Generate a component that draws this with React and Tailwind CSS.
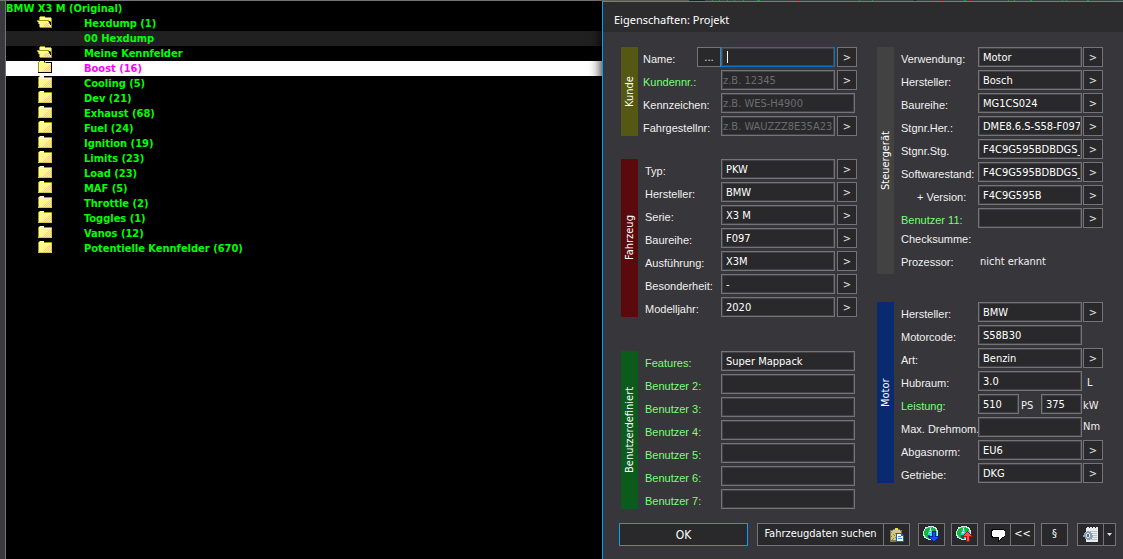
import { useState } from "react";
import clsx from "clsx";

/* ================= DATA ================= */
const TREE = [
  { name: "Hexdump (1)", icon: "open" },
  { name: "00 Hexdump", shaded: true },
  { name: "Meine Kennfelder", icon: "open" },
  { name: "Boost (16)", icon: "closed" },
  { name: "Cooling (5)", icon: "closed" },
  { name: "Dev (21)", icon: "closed" },
  { name: "Exhaust (68)", icon: "closed" },
  { name: "Fuel (24)", icon: "closed" },
  { name: "Ignition (19)", icon: "closed" },
  { name: "Limits (23)", icon: "closed" },
  { name: "Load (23)", icon: "closed" },
  { name: "MAF (5)", icon: "closed" },
  { name: "Throttle (2)", icon: "closed" },
  { name: "Toggles (1)", icon: "closed" },
  { name: "Vanos (12)", icon: "closed" },
  { name: "Potentielle Kennfelder (670)", icon: "closed" },
];

const VEHICLE = [
  { id: "typ", label: "Typ:", value: "PKW" },
  { id: "fz-hersteller", label: "Hersteller:", value: "BMW" },
  { id: "serie", label: "Serie:", value: "X3 M" },
  { id: "fz-baureihe", label: "Baureihe:", value: "F097" },
  { id: "ausfuehrung", label: "Ausführung:", value: "X3M" },
  { id: "besonderheit", label: "Besonderheit:", value: "-" },
  { id: "modelljahr", label: "Modelljahr:", value: "2020" },
];

const CUSTOM = [
  { id: "features", label: "Features:", value: "Super Mappack" },
  { id: "benutzer2", label: "Benutzer 2:" },
  { id: "benutzer3", label: "Benutzer 3:" },
  { id: "benutzer4", label: "Benutzer 4:" },
  { id: "benutzer5", label: "Benutzer 5:" },
  { id: "benutzer6", label: "Benutzer 6:" },
  { id: "benutzer7", label: "Benutzer 7:" },
];

const ECU = [
  { id: "verwendung", label: "Verwendung:", value: "Motor" },
  { id: "sg-hersteller", label: "Hersteller:", value: "Bosch" },
  { id: "sg-baureihe", label: "Baureihe:", value: "MG1CS024" },
  { id: "stgnr-her", label: "Stgnr.Her.:", value: "DME8.6.S-S58-F097" },
  { id: "stgnr-stg", label: "Stgnr.Stg.", value: "F4C9G595BDBDGS_" },
  { id: "softwarestand", label: "Softwarestand:", value: "F4C9G595BDBDGS_" },
  { id: "version", label: "+ Version:", value: "F4C9G595B", indent: true },
  { id: "benutzer11", label: "Benutzer 11:", green: true },
];

/* ================= ICONS ================= */
const FolderIcon = ({ open, selected }) =>
  open ? (
    <svg width="16" height="12" viewBox="0 0 16 12" shapeRendering="crispEdges">
      <path d="M2 1h1V0h5v1h6v1h1v10H3v-1H2V8H1V6H0V4h2z" fill="#9c9a00" />
      <path d="M3 1h5v1h6v3H3z" fill="#fff9a0" />
      <path d="M4 1h3v1H4z" fill="#fffde8" />
      <path d="M1 5h10v1h1v2h1v1h1v2H3V8H2V6H1z" fill="#fff68c" />
      <path d="M1 5h10v1H1z" fill="#fffde0" />
      <path d="M2 4h10v1H2z" fill="#9c9a00" />
      <path d="M12 10h1v1h-1zM10 10h1v1h-1zM8 10h1v1H8zM11 9h1v1h-1zM9 9h1v1H9zM7 9h1v1H7zM10 8h1v1h-1zM8 8h1v1H8zM11 7h1v1h-1zM9 7h1v1H9z" fill="#ffc08c" />
      <path d="M12 5h1v1h1v3h-1V7h-1z" fill="#141400" />
    </svg>
  ) : (
    <svg width="16" height="12" viewBox="0 0 16 12" shapeRendering="crispEdges">
      <path d="M2 0h5v1h8v11H1V1h1z" fill="#9c9a00" />
      <path d="M3 0h4v1H3z" fill="#fffde0" />
      <path d="M2 1h5v1H2zM2 2h12v9H2z" fill="#fff68c" />
      <path d="M2 2h12v1H2zM2 3h1v7H2z" fill="#fffbc0" />
      <path d="M12 4h1v1h-1zM13 5h1v1h-1zM11 5h1v1h-1zM12 6h1v1h-1zM10 6h1v1h-1zM13 7h1v1h-1zM11 7h1v1h-1zM9 7h1v1H9zM12 8h1v1h-1zM10 8h1v1h-1zM8 8h1v1H8zM13 9h1v1h-1zM11 9h1v1h-1zM9 9h1v1H9zM7 9h1v1H7zM12 10h1v1h-1zM10 10h1v1h-1zM8 10h1v1H8zM6 10h1v1H6z" fill="#ffc894" />
      <path d="M14 2h1v10H1v-1h13z" fill={selected ? "#000" : "#d6c850"} />
      {selected && <path d="M7 0h1v1H7zM9 1h6v1H9z" fill="#000" />}
    </svg>
  );

const ClipboardIcon = () => (
  <svg width="16" height="16" viewBox="0 0 16 16" shapeRendering="crispEdges">
    <path d="M1 3h3V2h2V1h3v1h2v1h2v12H1z" fill="#7d7a5c" />
    <path d="M2 4h10v9H2z" fill="#d2c978" />
    <path d="M2 5h1v1H2zM4 7h1v1H4zM2 9h1v1H2zM4 11h1v1H4zM6 6h1v1H6zM6 10h1v1H6zM5 8h1v1H5zM3 12h1v1H3zM8 6h1v1H8z" fill="#8c8a54" />
    <path d="M4 3h7v2H4z" fill="#c8c8c8" />
    <path d="M6 1h3v2H6z" fill="#ffe600" />
    <path d="M7 6h6v1h1v1h1v7H7z" fill="#1464b4" />
    <path d="M8 7h4v2h2v5H8z" fill="#fff" />
    <path d="M9 9h3v1H9zM9 11h4v1H9z" fill="#3c8ce0" />
  </svg>
);

const GlobeIcon = ({ up }) => (
  <svg width="17" height="17" viewBox="0 0 17 17" shapeRendering="crispEdges">
    <path d="M5 0h6v1h2v1h1v2h1v6h-1v2h-2v1h-2v1H5v-1H3v-1H1v-2H0V5h1V3h1V1h3z" fill="#d8e8e0" />
    <path d="M5 1h5v1h2v1h1v2h1v5h-1v1h-2v1H9v1H5v-1H3v-1H2V9H1V5h1V3h1V2h2z" fill="#18e4ec" />
    <path d="M4 2h3v2H6v2H5v3h1v3H4v-1H3v-1H2V9H1V5h1V3h2zM9 1h1v1h2v1h1v2h-2v1H9V4H8V2h1z" fill="#18b43c" />
    <path d="M7 2h1v3H7zM6 6h2v1H6z" fill="#fff" />
    <path d="M5 9h2v1h1v3H6v-1H5z" fill="#0c6450" />
    {up ? (
      <>
        <path d="M11 5h1v1h1v1h1v1h1v1h1v1h1v1h-3v5h-4v-5H6v-1h1V9h1V8h1V7h1V6h1z" fill="#a01414" />
        <path d="M11 6h1v1h1v1h1v1h1v1h-2v5h-2v-5H8V9h1V8h1V7h1z" fill="#ff5046" />
      </>
    ) : (
      <>
        <path d="M9 5h4v5h4v1h-1v1h-1v1h-1v1h-1v1h-1v1h-2v-1H9v-1H8v-1H7v-1H6v-1H5v-1h4z" fill="#0c1e8c" />
        <path d="M10 6h2v5h3v1h-1v1h-1v1h-1v1h-2v-1H9v-1H8v-1H7v-1h3z" fill="#1450f0" />
      </>
    )}
  </svg>
);

const BubbleIcon = () => (
  <svg width="16" height="14" viewBox="0 0 16 14" shapeRendering="crispEdges">
    <path d="M2 1h12v1h1v7h-1v1h-2v1h-1v1H9v2H8v-4H2V9H1V2h1z" fill="#000" />
    <path d="M3 2h11v1h1v5h-1v1h-2v1h-1v1h-1v1H9V9H3V8H2V3h1z" fill="#fff" />
  </svg>
);

const NotepadIcon = () => (
  <svg width="16" height="16" viewBox="0 0 16 16" shapeRendering="crispEdges">
    <path d="M3 1h1V0h2v1h1V0h2v1h1V0h2v1h1V0h2v15H3z" fill="#e8ecee" />
    <path d="M4 4h10v1H4zM6 6h8v1H6zM6 8h8v1H6zM6 10h8v1H6zM5 12h9v1H5z" fill="#b8c0c4" />
    <path d="M4 4h2v1h2v1h1v2h1v2H9v2H7v1H4v-1H2v-2H0V8h1V6h1V5h2z" fill="#8ca0b4" />
    <path d="M4 6h2v1h1v3H6v1H4v-1H3V7h1z" fill="#dce6f0" />
    <path d="M4 7h2v3H4z" fill="#5a6e82" />
  </svg>
);

/* bottom line of the graph that the windows lie over */
const GraphEdge = () => (
  <svg className="h-px w-[434px] shrink-0" viewBox="0 0 434 1" shapeRendering="crispEdges">
    <path d="M0 0h434v1H0z" fill="#4a5462" />
    <path d="M0 0h16v1H0zM225 0h2v1h-2z" fill="#1e2a40" />
    <path d="M23 0h1v1h-1zM30 0h1v1h-1zM38 0h1v1h-1zM45 0h1v1h-1zM54 0h1v1h-1zM68 0h3v1h-3zM170 0h1v1h-1zM183 0h1v1h-1zM275 0h2v1h-2zM319 0h1v1h-1zM325 0h1v1h-1zM341 0h2v1h-2zM373 0h1v1h-1zM377 0h1v1h-1zM398 0h2v1h-2z" fill="#00c840" />
    <path d="M108 0h3v1h-3zM252 0h3v1h-3zM280 0h3v1h-3z" fill="#c81428" />
  </svg>
);

/* ================= FORM PARTS ================= */
const Label = ({ htmlFor, green, indent, top, children }) => (
  <label
    htmlFor={htmlFor}
    className={clsx(
      "shrink-0 whitespace-nowrap font-['Liberation_Sans',sans-serif] text-[11px] leading-4",
      green ? "text-[#78ff78]" : "text-[#f0f0f0]",
      indent && "pl-4",
      !top && "pt-1"
    )}
  >
    {children}
  </label>
);

const TextField = ({ className, ...props }) => (
  <input
    type="text"
    className={clsx(
      "peer h-5 border border-[#747476] bg-[#29292b] pr-px pl-1 text-[11px] text-white outline-none",
      "shadow-[inset_0_0_0_1px_#434347] placeholder:text-[#6c6c6e] placeholder-shown:pl-px focus:border-[#0078d0]",
      className
    )}
    {...props}
  />
);

const MoreButton = ({ label, className = "w-5", children = ">" }) => (
  <button
    aria-label={label}
    className={clsx(
      "h-5 shrink-0 border border-[#747476] bg-[#29292b] text-[11px] leading-none text-[#e0e0e0]",
      className
    )}
  >
    {children}
  </button>
);

const Group = ({ title, color, children }) => (
  <section className="flex">
    <h2
      className={clsx(
        "flex w-[17px] shrink-0 rotate-180 items-center justify-center text-[11px] leading-4 text-white [writing-mode:vertical-rl]",
        color
      )}
    >
      {title}
    </h2>
    <div className="flex flex-1 flex-col gap-[3px]">{children}</div>
  </section>
);

/* left column: text box is either short with a button, or long */
const LeftRow = ({ id, label, value, green, button = true, tight, ...props }) => (
  <div className={clsx("flex h-5 items-center justify-between", tight ? "pl-[5px]" : "pl-[7px]")}>
    <Label htmlFor={id} green={green}>{label}</Label>
    <div className="flex w-[136px] shrink-0 gap-[2px]">
      <TextField
        id={id}
        defaultValue={value}
        className={button ? "w-[114px]" : "w-[134px]"}
        {...props}
      />
      {button && <MoreButton label={`${label} auswählen`} />}
    </div>
  </div>
);

const NameRow = () => (
  <div className="flex h-5 items-center pl-[5px]">
    <Label htmlFor="name">Name:</Label>
    <MoreButton label="Name suchen" className="ml-auto w-6">...</MoreButton>
    <div className="relative flex w-[136px] shrink-0 gap-[2px]">
      <TextField id="name" autoFocus placeholder=" " className="w-[114px] caret-transparent not-placeholder-shown:caret-white" />
      <MoreButton label="Name auswählen" />
      <span className="pointer-events-none absolute top-1 left-1.5 hidden h-3 w-px bg-white peer-placeholder-shown:block" />
    </div>
  </div>
);

const RightRow = ({ id, label, value, green, indent, top, button = true, unit, children }) => (
  <div className={clsx("flex h-5 pl-[7px]", top ? "items-start" : "items-center")}>
    <div className="flex w-[77px] shrink-0">
      <Label htmlFor={id} green={green} indent={indent} top={top}>{label}</Label>
    </div>
    {children || (
      <div className="flex items-center gap-px">
        <TextField id={id} defaultValue={value} className="w-[104px]" />
        {button && <MoreButton label={`${label} auswählen`} />}
        {unit}
      </div>
    )}
  </div>
);

const Unit = ({ className, children }) => (
  <span className={clsx("text-[11px] leading-4 text-[#f0f0f0]", className)}>{children}</span>
);

const ToolButton = ({ label, className = "w-[27px]", children }) => (
  <button
    aria-label={label}
    className={clsx(
      "flex h-[23px] shrink-0 items-center justify-center border border-[#747476] bg-[#29292b] text-[11px] text-white",
      className
    )}
  >
    {children}
  </button>
);

/* ================= TREE ================= */
const ProjectTree = () => {
  const [selected, setSelected] = useState("Boost (16)");

  return (
    <nav className="min-w-0 flex-1 border-l border-[#747476] bg-black text-[11px] leading-[15px] font-bold text-[#00ff00]">
      <p>BMW X3 M (Original)</p>
      <ul>
        {TREE.map((item) => {
          const active = item.name === selected;
          return (
            <li key={item.name}>
              <button
                onClick={() => setSelected(item.name)}
                className={clsx(
                  "flex h-[15px] w-full items-center whitespace-nowrap",
                  active ? "bg-white text-[#ff00ff]" : item.shaded && "bg-[#202020]"
                )}
              >
                <span className="flex h-full w-[78px] shrink-0 items-start pl-[31px]">
                  {item.icon && <FolderIcon open={item.icon === "open"} selected={active} />}
                </span>
                {item.name}
              </button>
            </li>
          );
        })}
      </ul>
    </nav>
  );
};

/* ================= DIALOG ================= */
const ProjectDialog = () => (
  <div
    role="dialog"
    aria-labelledby="dialog-title"
    className="z-10 flex w-[521px] shrink-0 flex-col border-t border-l border-[#00a2ff] bg-[#37363a] shadow-[0_4px_12px_#000]"
  >
    <header className="flex h-[30px] items-center bg-[#2c2c2e] px-[11px] pt-1.5">
      <h1 id="dialog-title" className="font-['Noto_Sans',sans-serif] text-[11px] text-white">Eigenschaften: Projekt</h1>
    </header>

    <div className="flex gap-5 pt-[15px] pl-[18px]">
      <div className="w-[236px] shrink-0">
        <Group title="Kunde" color="bg-[#545812]">
          <NameRow />
          <LeftRow id="kundennr" label="Kundennr.:" tight green placeholder="z.B. 12345" />
          <LeftRow id="kennzeichen" label="Kennzeichen:" tight button={false} placeholder="z.B. WES-H4900" />
          <LeftRow id="fahrgestell" label="Fahrgestellnr:" tight placeholder="z.B. WAUZZZ8E35A235" />
        </Group>
        <div className="mt-[23px]">
          <Group title="Fahrzeug" color="bg-[#5a0a0c]">
            {VEHICLE.map((row) => (
              <LeftRow key={row.id} {...row} />
            ))}
          </Group>
        </div>
        <div className="mt-[34px]">
          <Group title="Benutzerdefiniert" color="bg-[#0c5a1c]">
            {CUSTOM.map((row) => (
              <LeftRow key={row.id} {...row} green button={false} />
            ))}
          </Group>
        </div>
      </div>

      <div className="flex-1">
        <Group title="Steuergerät" color="bg-[#424242]">
          {ECU.map((row) => (
            <RightRow key={row.id} {...row} />
          ))}
          <RightRow label="Checksumme:" top>
            <span />
          </RightRow>
          <RightRow label="Prozessor:" top>
            <Unit className="pl-[2px]">nicht erkannt</Unit>
          </RightRow>
        </Group>
        <div className="mt-7">
          <Group title="Motor" color="bg-[#0a2a70]">
            <RightRow id="m-hersteller" label="Hersteller:" value="BMW" />
            <RightRow id="motorcode" label="Motorcode:" value="S58B30" button={false} />
            <RightRow id="art" label="Art:" value="Benzin" />
            <RightRow id="hubraum" label="Hubraum:" value="3.0" button={false} unit={<Unit className="pt-1 pl-1">L</Unit>} />
            <RightRow id="leistung" label="Leistung:" green>
              <div className="flex items-center">
                <TextField id="leistung" defaultValue="510" className="w-[41px]" />
                <Unit className="w-[22px] pt-1 pl-[2px]">PS</Unit>
                <TextField aria-label="Leistung in kW" defaultValue="375" className="w-[41px]" />
                <Unit className="pt-1 pl-px">kW</Unit>
              </div>
            </RightRow>
            <RightRow id="drehmoment" label="Max. Drehmom." button={false} unit={<Unit>Nm</Unit>} />
            <RightRow id="abgasnorm" label="Abgasnorm:" value="EU6" />
            <RightRow id="getriebe" label="Getriebe:" value="DKG" />
          </Group>
        </div>
      </div>
    </div>

    <footer className="flex pt-[14px] pr-[7px] pb-3 pl-4">
      <button className="h-[23px] w-[129px] border border-[#00a2ff] bg-[#29292b] text-[12px] leading-none text-white">
        OK
      </button>
      <div className="ml-[9px] flex -space-x-px">
        <ToolButton className="w-[127px]">Fahrzeugdaten suchen</ToolButton>
        <ToolButton label="Einfügen"><ClipboardIcon /></ToolButton>
      </div>
      <div className="ml-2 flex flex-1 gap-1.5">
        <ToolButton label="Herunterladen"><GlobeIcon /></ToolButton>
        <ToolButton label="Hochladen"><GlobeIcon up /></ToolButton>
        <div className="flex -space-x-px">
          <ToolButton label="Kommentar"><BubbleIcon /></ToolButton>
          <ToolButton className="w-[25px] border-[#0078d0]">&lt;&lt;</ToolButton>
        </div>
        <ToolButton>§</ToolButton>
        <div className="ml-auto flex -space-x-px">
          <ToolButton label="Optionen"><NotepadIcon /></ToolButton>
          <ToolButton label="Weitere Optionen" className="w-[13px]">
            <svg className="shrink-0" width="5" height="3" viewBox="0 0 5 3" fill="#e0e0e0">
              <path d="M0 0h5L2.5 3z" />
            </svg>
          </ToolButton>
        </div>
      </div>
    </footer>
  </div>
);

/* ================= APP ================= */
const App = () => (
  <div className="flex min-h-screen flex-col overflow-hidden bg-[#3a3a3e] font-['DejaVu_Sans_Condensed','DejaVu_Sans',sans-serif]">
    <div className="flex h-px justify-end bg-[#747476]">
      <GraphEdge />
    </div>
    <div className="flex flex-1 pl-[5px]">
      <ProjectTree />
      <ProjectDialog />
    </div>
  </div>
);

export default App;
